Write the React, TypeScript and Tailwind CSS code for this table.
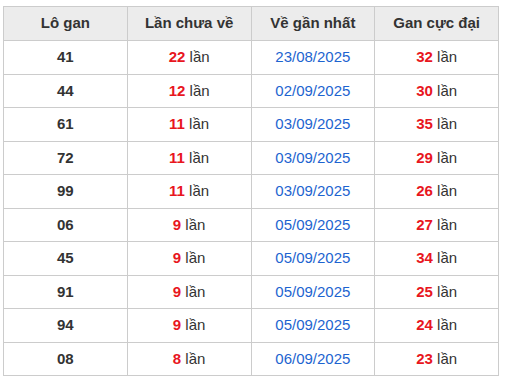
const ROWS: [string, number, string, number][] = [
  ['41', 22, '23/08/2025', 32],
  ['44', 12, '02/09/2025', 30],
  ['61', 11, '03/09/2025', 35],
  ['72', 11, '03/09/2025', 29],
  ['99', 11, '03/09/2025', 26],
  ['06', 9, '05/09/2025', 27],
  ['45', 9, '05/09/2025', 34],
  ['91', 9, '05/09/2025', 25],
  ['94', 9, '05/09/2025', 24],
  ['08', 8, '06/09/2025', 23],
];

const HEADERS = ['Lô gan', 'Lần chưa về', 'Về gần nhất', 'Gan cực đại'];

function Times({ n }: { n: number }) {
  return (
    <>
      <b className="font-bold text-[#e8161e]">{n}</b> lần
    </>
  );
}

export default function App() {
  return (
    <div className="bg-white pl-[3px] pt-[6px] font-['Liberation_Sans',Arial,sans-serif] text-[15px] text-[#333]">
      <table className="w-[496px] table-fixed border-collapse">
        <thead>
          <tr className="h-[34px] bg-[#ececec]">
            {HEADERS.map((h) => (
              <th key={h} className="border border-[#cccccc] p-0 text-center font-bold">
                {h}
              </th>
            ))}
          </tr>
        </thead>
        <tbody>
          {ROWS.map(([lo, chua, ngay, max]) => (
            <tr key={lo} className="h-[33.5px]">
              <td className="border border-[#cccccc] p-0 text-center font-bold">{lo}</td>
              <td className="border border-[#cccccc] p-0 text-center">
                <Times n={chua} />
              </td>
              <td className="border border-[#cccccc] p-0 text-center text-[#1d64d0]">{ngay}</td>
              <td className="border border-[#cccccc] p-0 text-center">
                <Times n={max} />
              </td>
            </tr>
          ))}
        </tbody>
      </table>
    </div>
  );
}
